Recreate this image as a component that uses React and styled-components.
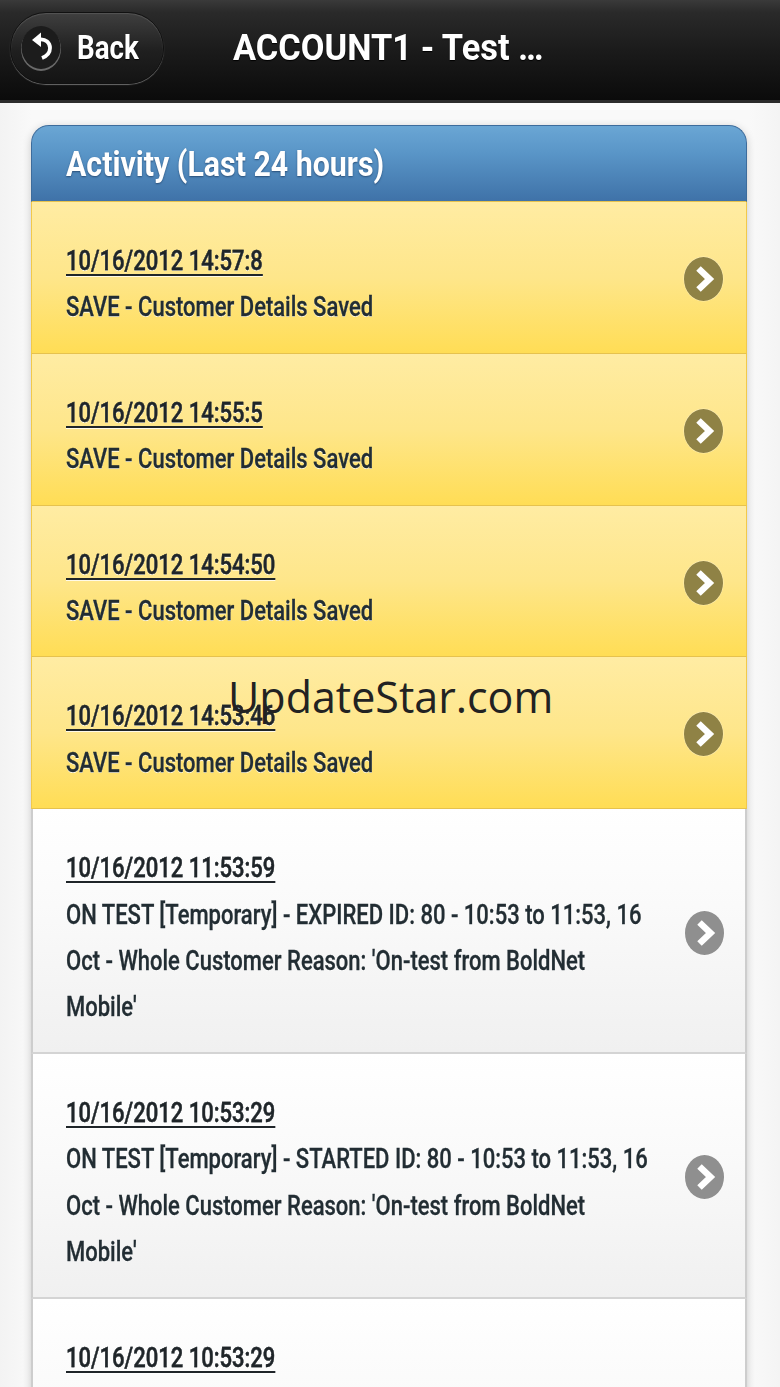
import React from "react";
import styled, { createGlobalStyle } from "styled-components";

const Global = createGlobalStyle`
  html, body { margin: 0; padding: 0; background: #f6f6f6; }
  body { font-family: Roboto, "Liberation Sans", sans-serif; overflow: hidden; }
`;
const Page = styled.div`
  position: relative;
  width: 780px;
  height: 1387px;
  overflow: hidden;
  background: linear-gradient(90deg, #f3f3f3 0%, #f9f9f9 4%, #f9f9f9 96%, #f4f4f4 100%);
`;
const Bar = styled.header`
  box-sizing: border-box;
  display: flex;
  align-items: center;
  height: 103px;
  padding: 0 0 5px 10px;
  background: linear-gradient(#3a3a3a 0%, #2a2a2a 12%, #1b1b1b 50%, #0b0b0b 100%);
  border-bottom: 3px solid #2b2b2b;
`;
const BackButton = styled.div`
  box-sizing: border-box;
  width: 154px;
  height: 72px;
  border-radius: 36px;
  flex: none;
  display: flex;
  align-items: center;
  padding-left: 9px;
  background: linear-gradient(#3f3f3f, #1f1f1f 55%, #141414);
  border: 1.5px solid #111;
  box-shadow: 0 1px 1px #6a6a6a, inset 0 1px 1px #555;
`;
const BackIcon = styled.svg`
  width: 42px;
  height: 46px;
  flex: none;
`;
const BackLabel = styled.span`
  display: block;
  margin-left: 15px;
  color: #fff;
  font-weight: 700;
  font-size: 33px;
  line-height: 40px;
  transform: scaleX(0.84);
  transform-origin: left center;
  text-shadow: 0 1px 1px #000;
`;
const Title = styled.h1`
  margin: 0 0 0 69px;
  color: #fff;
  font-weight: 700;
  font-size: 37px;
  line-height: 44px;
  white-space: nowrap;
  transform: scaleX(0.93);
  transform-origin: left center;
  text-shadow: 0 1px 1px #000;
`;
const Card = styled.section`
  margin: 22px 33px 0 31px;
  border-radius: 18px 18px 0 0;
  box-shadow: 0 2px 8px rgba(0, 0, 0, 0.2);
`;
const CardHead = styled.div`
  box-sizing: border-box;
  height: 77px;
  padding: 19px 0 0 34px;
  border: 1px solid #3d6c9c;
  border-bottom-color: #e6c24e;
  border-radius: 18px 18px 0 0;
  background: linear-gradient(#6aa6d4, #5a96c8 35%, #3f72a8);
  color: #fff;
  font-weight: 700;
  font-size: 35px;
  line-height: 40px;
`;
const HeadText = styled.span`
  display: block;
  white-space: nowrap;
  transform: scaleX(0.866);
  transform-origin: left center;
  text-shadow: 0 1px 2px #2a4f78;
`;
const Row = styled.div`
  box-sizing: border-box;
  display: flex;
  align-items: center;
  padding: 36px ${p => (p.$hot ? 22 : 20)}px ${p => (p.$hot ? 22 : 21)}px ${p => (p.$hot ? 34 : 33)}px;
  border-style: solid;
  border-width: 0 ${p => (p.$hot ? 1 : 2)}px ${p => (p.$hot ? 1 : 2)}px;
  border-color: ${p => (p.$hot ? "#f2c94a" : "#cdcdcd")};
  border-bottom-color: ${p => (p.$hot ? "#e6c24e" : "#d4d4d4")};
  background: ${p =>
    p.$hot
      ? "linear-gradient(#ffeca3, #fee68a 50%, #ffdd55)"
      : "linear-gradient(#ffffff, #fafafa 40%, #f0f0f0)"};
`;
const RowBody = styled.div`
  flex: 1;
  min-width: 0;
  margin-right: 30px;
`;
const Squeeze = styled.div`
  width: ${100 / 0.815}%;
  transform: scaleX(0.815);
  transform-origin: left top;
  font-size: 27px;
  line-height: 46.4px;
  color: #222d33;
  text-shadow: 0 1px 0 rgba(255, 255, 255, 0.8);
  font-weight: 500;
  -webkit-text-stroke: 0.3px currentColor;
`;
const DateLink = styled.u`
  color: #1f2529;
  font-weight: 500;
  text-underline-offset: 4px;
  text-decoration-thickness: 2px;
`;
const Chevron = styled.svg`
  width: 41px;
  height: 46px;
  flex: none;
  margin-top: -11px;
`;
const Mark = styled.div`
  position: absolute;
  left: 228px;
  top: 668px;
  font-family: "Open Sans", sans-serif;
  font-weight: 400;
  font-size: 43px;
  line-height: 58px;
  color: #222;
  white-space: nowrap;
`;

const rows = [
  { hot: true, date: "10/16/2012 14:57:8", text: "SAVE - Customer Details Saved" },
  { hot: true, date: "10/16/2012 14:55:5", text: "SAVE - Customer Details Saved" },
  { hot: true, date: "10/16/2012 14:54:50", text: "SAVE - Customer Details Saved" },
  { hot: true, date: "10/16/2012 14:53:46", text: "SAVE - Customer Details Saved" },
  { date: "10/16/2012 11:53:59", text: "ON TEST [Temporary] - EXPIRED ID: 80 - 10:53 to 11:53, 16 Oct - Whole Customer Reason: 'On-test from BoldNet Mobile'" },
  { date: "10/16/2012 10:53:29", text: "ON TEST [Temporary] - STARTED ID: 80 - 10:53 to 11:53, 16 Oct - Whole Customer Reason: 'On-test from BoldNet Mobile'" },
  { date: "10/16/2012 10:53:29", text: "ON TEST [Temporary] - STARTED ID: 80 - 10:53 to 11:53, 16 Oct - Whole Customer Reason: 'On-test from BoldNet Mobile'" },
];

function ChevronIcon({ hot }) {
  return (
    <Chevron viewBox="0 0 41 46">
      <ellipse cx="20.5" cy="23" rx="20" ry="22.5" fill="#fff" opacity="0.4" />
      <ellipse cx="20.5" cy="23" rx="19.5" ry="22" fill={hot ? "#8f8245" : "#8f8f8f"} />
      <path d="M15.5 12.5 L26.5 23 L15.5 33.5" fill="none" stroke="#fff" strokeWidth="6.5" strokeLinejoin="miter" />
    </Chevron>
  );
}

export default function App() {
  return (
    <Page>
      <Global />
      <Bar>
        <BackButton>
          <BackIcon viewBox="0 0 42 46">
            <ellipse cx="21" cy="24" rx="20" ry="22" fill="#6a6a6a" />
            <ellipse cx="21" cy="22.5" rx="19.5" ry="21.5" fill="#1c1c1c" />
            <path d="M12 15 L21 7.5 L21 22 Z" fill="#fff" />
            <path d="M19 14.5 C26 13.5 30 18 30 23 C30 28 27 31 22 33" fill="none" stroke="#fff" strokeWidth="3.8" />
          </BackIcon>
          <BackLabel>Back</BackLabel>
        </BackButton>
        <Title>ACCOUNT1 - Test …</Title>
      </Bar>
      <Card>
        <CardHead>
          <HeadText>Activity (Last 24 hours)</HeadText>
        </CardHead>
        {rows.map((r, i) => (
          <Row key={i} $hot={r.hot}>
            <RowBody>
              <Squeeze>
                <DateLink>{r.date}</DateLink>
                <br />
                {r.text}
              </Squeeze>
            </RowBody>
            <ChevronIcon hot={r.hot} />
          </Row>
        ))}
      </Card>
      <Mark>UpdateStar.com</Mark>
    </Page>
  );
}
